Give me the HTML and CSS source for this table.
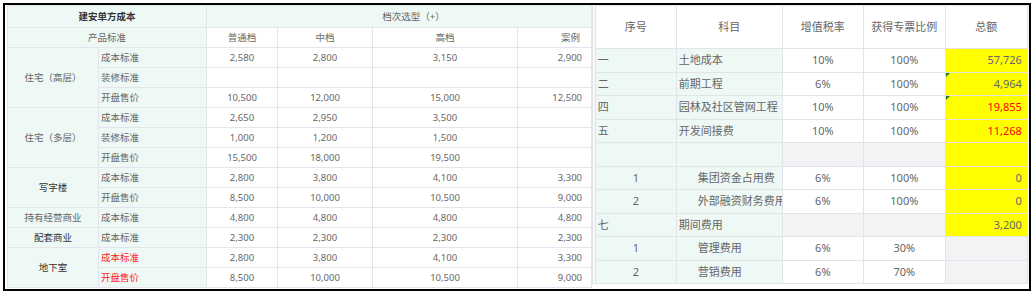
FILE: index.html
```html
<!DOCTYPE html>
<html lang="zh">
<head>
<meta charset="utf-8">
<title>建安单方成本</title>
<link rel="stylesheet" href="styles.css">
</head>
<body>
<div class="frame">
  <div class="left-wrap">
    <table class="cost">
      <colgroup>
        <col class="w91"><col class="w108"><col class="w71"><col class="w95"><col class="w145"><col class="w74">
      </colgroup>
      <tr class="h1">
        <th colspan="2" class="mint title">建安单方成本</th>
        <th colspan="4" class="mint sel">档次选型（+）</th>
      </tr>
      <tr>
        <th colspan="2" class="mint">产品标准</th>
        <th>普通档</th><th>中档</th><th>高档</th><th class="r rh">案例</th>
      </tr>
      <tr>
        <td rowspan="3" class="mint grp">住宅（高层）</td>
        <td class="mint item">成本标准</td><td>2,580</td><td>2,800</td><td>3,150</td><td class="r">2,900</td>
      </tr>
      <tr><td class="mint item">装修标准</td><td></td><td></td><td></td><td class="r"></td></tr>
      <tr><td class="mint item">开盘售价</td><td>10,500</td><td>12,000</td><td>15,000</td><td class="r">12,500</td></tr>
      <tr>
        <td rowspan="3" class="mint grp">住宅（多层）</td>
        <td class="mint item">成本标准</td><td>2,650</td><td>2,950</td><td>3,500</td><td class="r"></td>
      </tr>
      <tr><td class="mint item">装修标准</td><td>1,000</td><td>1,200</td><td>1,500</td><td class="r"></td></tr>
      <tr><td class="mint item">开盘售价</td><td>15,500</td><td>18,000</td><td>19,500</td><td class="r"></td></tr>
      <tr>
        <td rowspan="2" class="mint grp dark">写字楼</td>
        <td class="mint item">成本标准</td><td>2,800</td><td>3,800</td><td>4,100</td><td class="r">3,300</td>
      </tr>
      <tr><td class="mint item">开盘售价</td><td>8,500</td><td>10,000</td><td>10,500</td><td class="r">9,000</td></tr>
      <tr>
        <td class="mint grp">持有经营商业</td>
        <td class="mint item">成本标准</td><td>4,800</td><td>4,800</td><td>4,800</td><td class="r">4,800</td>
      </tr>
      <tr>
        <td class="mint grp dark">配套商业</td>
        <td class="mint item">成本标准</td><td>2,300</td><td>2,300</td><td>2,300</td><td class="r">2,300</td>
      </tr>
      <tr>
        <td rowspan="2" class="mint grp dark">地下室</td>
        <td class="mint item red">成本标准</td><td>2,800</td><td>3,800</td><td>4,100</td><td class="r">3,300</td>
      </tr>
      <tr><td class="mint item red">开盘售价</td><td>8,500</td><td>10,000</td><td>10,500</td><td class="r">9,000</td></tr>
    </table>
  </div>
  <div class="gutter"></div>
  <table class="tax">
    <colgroup>
      <col class="w81"><col class="w106"><col class="w81"><col class="w82"><col class="w82">
    </colgroup>
    <thead>
      <tr><th>序号</th><th>科目</th><th>增值税率</th><th>获得专票比例</th><th>总额</th></tr>
    </thead>
    <tbody>
      <tr><td class="mint no">一</td><td class="mint subj">土地成本</td><td>10%</td><td>100%</td><td class="amt yel">57,726</td></tr>
      <tr><td class="mint no">二</td><td class="mint subj">前期工程</td><td>6%</td><td>100%</td><td class="amt yel flag">4,964</td></tr>
      <tr><td class="mint no">四</td><td class="mint subj">园林及社区管网工程</td><td>10%</td><td>100%</td><td class="amt yel flag red">19,855</td></tr>
      <tr><td class="mint no">五</td><td class="mint subj">开发间接费</td><td>10%</td><td>100%</td><td class="amt yel red">11,268</td></tr>
      <tr><td class="mint no"></td><td class="mint subj"></td><td class="gray"></td><td class="gray"></td><td class="amt yel"></td></tr>
      <tr><td class="mint sub-no">1</td><td class="mint subj sub">集团资金占用费</td><td>6%</td><td>100%</td><td class="amt yel">0</td></tr>
      <tr><td class="mint sub-no">2</td><td class="mint subj sub">外部融资财务费用</td><td>6%</td><td>100%</td><td class="amt yel">0</td></tr>
      <tr><td class="mint no">七</td><td class="mint subj">期间费用</td><td class="gray"></td><td class="gray"></td><td class="amt yel">3,200</td></tr>
      <tr><td class="mint sub-no">1</td><td class="mint subj sub">管理费用</td><td>6%</td><td>30%</td><td class="amt gray"></td></tr>
      <tr><td class="mint sub-no">2</td><td class="mint subj sub">营销费用</td><td>6%</td><td>70%</td><td class="amt gray"></td></tr>
    </tbody>
  </table>
  <div class="gutter2"></div>
</div>
</body>
</html>
```

FILE: styles.css
```css
body {
  margin: 0;
  background: #fff;
  font-family: "Noto Sans", "Noto Sans CJK SC", sans-serif;
}

.frame {
  margin: 3px 0 0 3px;
  width: 1024px;
  height: 284px;
  border: 2px solid #000;
  display: flex;
  align-items: flex-start;
}

.left-wrap {
  padding-left: 2px;
}

table {
  border-collapse: collapse;
  table-layout: fixed;
}

.w91 { width: 91px; }
.w108 { width: 108px; }
.w71 { width: 71px; }
.w95 { width: 95px; }
.w145 { width: 145px; }
.w74 { width: 74px; }
.w81 { width: 81px; }
.w106 { width: 106px; }
.w82 { width: 82px; }

.cost {
  width: 584px;
  font-size: 9.5px;
  color: #666;
}

.cost tr {
  height: 20px;
}

.cost tr.h1 {
  height: 22px;
}

.cost th,
.cost td {
  border: 1px solid #e4e4ec;
  padding: 0 2px;
  line-height: 12px;
  text-align: center;
  font-weight: normal;
  white-space: nowrap;
  overflow: hidden;
  background: #fff;
}

.cost .mint,
.tax .mint,
.tax th {
  background: #eef8f5;
}

.cost .title {
  font-weight: bold;
  color: #333;
}

.cost .sel {
  padding-left: 31px;
}

.cost .item {
  text-align: left;
  padding-left: 2px;
}

.cost .grp.dark {
  color: #333;
}

.cost .red {
  color: #ff1a1a;
}

.cost .r {
  text-align: right;
  padding-right: 9px;
}

.cost .rh {
  padding-right: 11px;
}

.gutter {
  width: 3px;
  height: 280px;
  background: #f7f7f9;
  border-left: 1px solid #e4e4ec;
}

.gutter2 {
  width: 2px;
  height: 278px;
  background: #f7f7f9;
}

.tax {
  width: 432px;
  font-size: 11px;
  color: #666;
}

.tax thead tr {
  height: 43px;
}

.tax tbody tr {
  height: 23.5px;
}

.tax th,
.tax td {
  border: 1px solid #e2e4ea;
  padding: 0 2px;
  line-height: 14px;
  text-align: center;
  font-weight: normal;
  white-space: nowrap;
  overflow: hidden;
  background: #fff;
}

.tax .no,
.tax .subj {
  text-align: left;
  padding-left: 2px;
}

.tax .sub-no {
  text-align: center;
}

.tax .subj.sub {
  padding-left: 21px;
}

.tax .amt {
  text-align: right;
  padding-right: 5px;
  position: relative;
}

.tax .yel {
  background: #ffff00;
}

.tax .gray {
  background: #f2f3f5;
}

.tax .red {
  color: #ff0000;
}

.tax .flag::before {
  content: "";
  position: absolute;
  left: 0;
  top: 0;
  border-top: 4px solid #1f7a1f;
  border-right: 4px solid transparent;
}
```
